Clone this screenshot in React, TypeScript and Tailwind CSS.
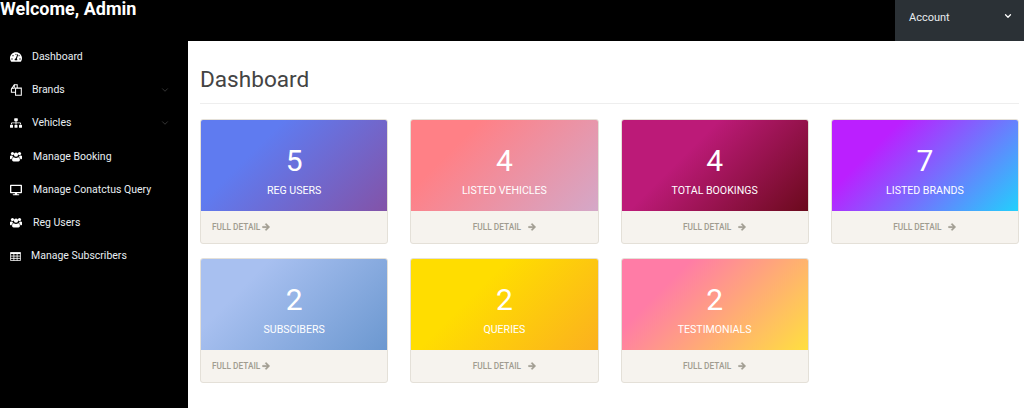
import type { ComponentType } from 'react'
import { FaArrowRight, FaDesktop, FaSitemap, FaTachometerAlt } from 'react-icons/fa'
import { ChevronDown } from 'lucide-react'

type IconProps = { className?: string }

function BrandsIcon({ className }: IconProps) {
  return (
    <svg viewBox="0 0 14 14" fill="none" stroke="currentColor" strokeWidth="1.2" className={className}>
      <path d="M6.5 9.5H1.6V6L5 1h3.4v3.6" />
      <path d="M5 1v4H1.6" />
      <path d="M6.5 4.8h6.7v8.4H6.5z" />
    </svg>
  )
}

function UsersIcon({ className }: IconProps) {
  return (
    <svg viewBox="0 0 16 13" fill="currentColor" className={className}>
      <circle cx="3.3" cy="2.6" r="2.1" />
      <circle cx="12.7" cy="2.6" r="2.1" />
      <circle cx="8" cy="4" r="2.8" />
      <path d="M0 6.2C.5 5 1.6 5.2 3.4 5.7c.3.7.7 1.2 1.2 1.6C3.2 7.7 2.4 8.6 2.2 10H.8C.2 10 0 9.6 0 9zM16 6.2c-.5-1.2-1.6-1-3.4-.5-.3.7-.7 1.2-1.2 1.6 1.4.4 2.2 1.3 2.4 2.7h1.4c.6 0 .8-.4.8-1z" />
      <path d="M5 7.6c1.8 1 4.2 1 6 0 1.4.4 2.2 1.6 2.2 3.2 0 1.3-.7 2.2-2 2.2H4.8c-1.3 0-2-.9-2-2.2 0-1.6.8-2.8 2.2-3.2z" />
    </svg>
  )
}

function TableIcon({ className }: IconProps) {
  return (
    <svg viewBox="0 0 13 11" fill="none" stroke="currentColor" strokeWidth="1" className={className}>
      <path d="M.5.5h12v10H.5z" />
      <path d="M.5 1.5h12" strokeWidth="2" />
      <path d="M.5 5h12M.5 7.8h12M4.5 2v8.5M8.5 2v8.5" />
    </svg>
  )
}

type NavItem = {
  label: string
  icon: ComponentType<IconProps>
  iconSize: string
  caret?: boolean
  gap: string
}

const navItems: NavItem[] = [
  { label: 'Dashboard', icon: FaTachometerAlt, iconSize: 'w-[12px] h-[12px]', gap: 'gap-[10px]' },
  { label: 'Brands', icon: BrandsIcon, iconSize: 'w-[12px] h-[12px]', caret: true, gap: 'gap-[10px]' },
  { label: 'Vehicles', icon: FaSitemap, iconSize: 'w-[12px] h-[12px]', caret: true, gap: 'gap-[10px]' },
  { label: 'Manage Booking', icon: UsersIcon, iconSize: 'w-[12px] h-[11px]', gap: 'gap-[11px]' },
  { label: 'Manage Conatctus Query', icon: FaDesktop, iconSize: 'w-[12px] h-[12px]', gap: 'gap-[11px]' },
  { label: 'Reg Users', icon: UsersIcon, iconSize: 'w-[12px] h-[11px]', gap: 'gap-[11px]' },
  { label: 'Manage Subscribers', icon: TableIcon, iconSize: 'w-[11px] h-[9px]', gap: 'gap-[10px]' },
]

type Stat = {
  value: number
  label: string
  gradient: string
  tight?: boolean
}

const stats: Stat[] = [
  { value: 5, label: 'REG USERS', gradient: 'bg-[linear-gradient(135deg,#5f7bf0_30%,#8353a8_100%)]', tight: true },
  { value: 4, label: 'LISTED VEHICLES', gradient: 'bg-[linear-gradient(135deg,#ff8086_25%,#d4a8c8_100%)]' },
  { value: 4, label: 'TOTAL BOOKINGS', gradient: 'bg-[linear-gradient(135deg,#bc1a78_35%,#6b0a1c_100%)]' },
  { value: 7, label: 'LISTED BRANDS', gradient: 'bg-[linear-gradient(135deg,#bb1fff_25%,#22d0fc_100%)]' },
  { value: 2, label: 'SUBSCIBERS', gradient: 'bg-[linear-gradient(135deg,#a8c0f0_25%,#6c98d0_100%)]', tight: true },
  { value: 2, label: 'QUERIES', gradient: 'bg-[linear-gradient(135deg,#ffdd00_35%,#fbb01f_100%)]' },
  { value: 2, label: 'TESTIMONIALS', gradient: 'bg-[linear-gradient(135deg,#ff7ca6_25%,#ffdf40_100%)]' },
]

function StatCard({ value, label, gradient, tight }: Stat) {
  return (
    <article className="h-[125px] overflow-hidden rounded-[3px] border border-[#e4e0d8] bg-[#f6f3ee]">
      <div className={`flex h-[91px] flex-col items-center text-white ${gradient}`}>
        <p className="mt-[23px] text-[30px] leading-[36px]">{value}</p>
        <p className="mt-[4px] text-[10.6px] leading-[16px]">{label}</p>
      </div>
      <div className={`flex h-[32px] items-center text-[#a09c90] ${tight ? 'pl-[11px]' : 'justify-center'}`}>
        <span className="text-[8.3px] font-medium">FULL DETAIL</span>
        <FaArrowRight className={`size-[8px] stroke-current stroke-[40px] ${tight ? 'ml-[2px]' : 'ml-[7px]'}`} />
      </div>
    </article>
  )
}

export default function App() {
  return (
    <div className="flex h-[408px] w-[1024px] flex-col overflow-hidden bg-white font-['Roboto',sans-serif]">
      <header className="flex h-[41px] shrink-0 items-stretch justify-between bg-black">
        <h1 className="text-[18px] font-bold leading-[18px] text-white">Welcome, Admin</h1>
        <button className="flex w-[129px] items-start justify-between bg-[#2b3136] pl-[14px] pr-[11px] pt-[11px] text-[11px] leading-[13px] text-[#e8ecef]">
          Account
          <ChevronDown className="size-[10px] text-white" strokeWidth={3} />
        </button>
      </header>

      <div className="flex min-h-0 flex-1">
        <nav className="w-[188px] shrink-0 bg-black pl-[10px] pr-[18px]">
          <ul className="-mt-[0.7px]">
            {navItems.map((item) => (
              <li key={item.label} className={`flex h-[33.2px] items-center text-[10.5px] text-[#e8eef2] ${item.gap}`}>
                <item.icon className={`${item.iconSize} shrink-0 text-white`} />
                <span className="flex-1">{item.label}</span>
                {item.caret && <ChevronDown className="size-[10px] text-[#555]" strokeWidth={1.5} />}
              </li>
            ))}
          </ul>
        </nav>

        <main className="flex-1 pl-[12px] pr-[5px] pt-[24px]">
          <h2 className="border-b border-[#eeeeee] pb-[8px] text-[22.6px] leading-[30px] text-[#444444]">Dashboard</h2>
          <div className="mt-[15px] grid grid-cols-4 gap-x-[22px] gap-y-[14px]">
            {stats.map((stat) => (
              <StatCard key={stat.label} {...stat} />
            ))}
          </div>
        </main>
      </div>
    </div>
  )
}
